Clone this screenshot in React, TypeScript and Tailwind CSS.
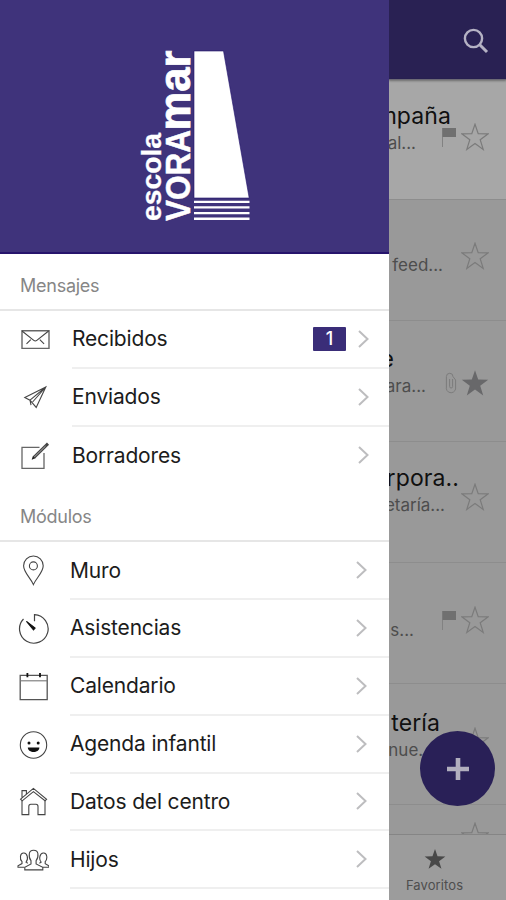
import type { ReactNode } from 'react';

const STAR =
  'M14 1.2 L17.2 10.6 L27.2 10.8 L19.2 16.8 L22.2 26.4 L14 20.6 L5.8 26.4 L8.8 16.8 L0.8 10.8 L10.8 10.6 Z';

function Star({ filled = false }: { filled?: boolean }) {
  return (
    <svg width="28" height="28" viewBox="0 0 28 28" className="shrink-0">
      <path d={STAR} fill={filled ? '#68686a' : 'none'} stroke={filled ? 'none' : '#7b7b7b'} strokeWidth="1.2" />
    </svg>
  );
}

function Flag() {
  return (
    <svg width="16" height="20" viewBox="0 0 16 20" className="shrink-0">
      <path d="M1.5 1V20" stroke="#828282" strokeWidth="1" />
      <path d="M1.5 1H15V10H1.5Z" fill="#707070" />
    </svg>
  );
}

function Clip() {
  return (
    <svg width="12" height="22" viewBox="0 0 12 22" className="shrink-0" fill="none" stroke="#7c7c7c" strokeWidth="1">
      <path d="M4.6 7V14.5M7.6 7V14.5M4.6 14.5a1.5 1.5 0 1 0 3 0M1.4 15V4.6a3.3 3.3 0 0 1 6.6 0M1.4 15a4.6 4.6 0 0 0 9.2 2V8L8 4.6" />
    </svg>
  );
}

type Mail = {
  title?: string;
  titleBox: string;
  sub?: string;
  subBox: string;
  mark?: ReactNode;
  filled?: boolean;
  shift: string;
  box: string;
};

const mails: Mail[] = [
  { title: 'mpaña', titleBox: 'w-[62px]', sub: 'al...', subBox: 'w-[27px]', mark: <Flag />, shift: 'mt-[1px]', box: 'h-[120px] bg-[#a7a7a7] pt-[21px]' },
  { titleBox: 'w-[60px]', sub: 'feed...', subBox: 'w-[54px]', shift: '-mt-[2px]', box: 'h-[121px] pt-[23px]' },
  { title: 'e', titleBox: 'w-[5px]', sub: 'ara...', subBox: 'w-[37px]', mark: <Clip />, filled: true, shift: 'mt-[4px]', box: 'h-[121px] pt-[23px]' },
  { title: 'rpora..', titleBox: 'w-[70px]', sub: 'etaría...', subBox: 'w-[56px]', shift: '-mt-[1px]', box: 'h-[121px] pt-[21px]' },
  { titleBox: 'w-[60px]', sub: 's...', subBox: 'w-[25px] mt-[2px]', mark: <Flag />, shift: '-mt-[1px]', box: 'h-[121px] pt-[23px]' },
  { title: 'tería', titleBox: 'w-[51px]', sub: 'nue...', subBox: 'w-[44px]', shift: '-mt-[2px]', box: 'h-[121px] pt-[24px]' },
  { titleBox: 'w-[60px]', subBox: 'w-[40px]', shift: '-mt-[4px]', box: 'h-[121px] pt-0' },
];

function MailRow({ m }: { m: Mail }) {
  return (
    <div className={`shrink-0 border-b border-[#8d8d8d] ${m.box}`}>
      <div className={`flex h-[30px] items-center justify-end whitespace-nowrap text-[23px] tracking-[0.1px] text-[#101010] ${m.titleBox}`}>
        {m.title}
      </div>
      <div className="flex h-[28px] justify-between pr-[17px]">
        <div className={`flex h-[26px] items-center justify-end whitespace-nowrap text-[17px] text-[#4d4d4d] ${m.subBox}`}>
          {m.sub}
        </div>
        <div className={`flex h-[28px] -translate-y-[9px] items-center gap-[4px] ${m.shift}`}>
          {m.mark}
          <Star filled={m.filled} />
        </div>
      </div>
    </div>
  );
}

function Icon({ children }: { children: ReactNode }) {
  return (
    <svg width="32" height="32" viewBox="0 0 32 32" fill="none" stroke="#444" strokeWidth="1.1" className="shrink-0">
      {children}
    </svg>
  );
}

const icons: Record<string, ReactNode> = {
  mail: (
    <Icon>
      <path d="M3 6.8H30V24.4H3Z" stroke="#666" strokeWidth="1.4" />
      <path d="M3 7L14.8 16.4Q16.3 17.6 17.8 16.4L29.6 7M7.5 19.8L11.8 15.6M25.1 19.8L20.8 15.6" />
    </Icon>
  ),
  send: (
    <Icon>
      <path d="M26.8 5L5.8 15.6L11 18.2L17.2 25.4ZM26.8 5L11 18.2L12 23.2M26.8 5L13.6 20" />
    </Icon>
  ),
  edit: (
    <Icon>
      <path d="M20.5 8.3H3V29.3H25V14" stroke="#666" strokeWidth="1.3" />
      <path d="M15 18.3L29 4.7" stroke="#444" strokeWidth="3" />
      <path d="M15 18.3L26.6 7" stroke="#aaa" strokeWidth="1" />
      <path d="M12.6 20.7L14 16.8L16.4 19.2Z" fill="#222" stroke="none" />
    </Icon>
  ),
  pin: (
    <Icon>
      <path d="M16.4 29.6C13.4 22.5 6.6 17.5 6.6 10.8A9.8 9.8 0 0 1 26.2 10.8C26.2 17.5 19.5 22.5 16.4 29.6Z" />
      <circle cx="16.4" cy="10.9" r="4" />
    </Icon>
  ),
  clock: (
    <Icon>
      <path d="M17.5 8.3V1.6A14.3 14.3 0 1 1 6.5 6" strokeWidth="1.2" />
      <path d="M9.5 8.4L18.1 15L16.5 16.8Z" fill="#111" stroke="#111" />
    </Icon>
  ),
  calendar: (
    <Icon>
      <path d="M3.2 4.3H30.2V28.7H3.2Z" stroke="#555" strokeWidth="1.3" />
      <path d="M3.2 9.8H30.2" stroke="#777" />
      <path d="M10.4 2V6.3M23 2V6.3" stroke="#111" strokeWidth="1.8" />
    </Icon>
  ),
  smile: (
    <Icon>
      <circle cx="16.5" cy="16" r="13.2" />
      <circle cx="12" cy="14" r="1.5" fill="#111" stroke="none" />
      <circle cx="21.2" cy="14" r="1.5" fill="#111" stroke="none" />
      <path d="M10.8 18.4H22.4C22.2 24.4 11 24.4 10.8 18.4Z" fill="#111" stroke="none" />
    </Icon>
  ),
  house: (
    <Icon>
      <path d="M3.6 13.2L16.4 2.4L29.6 13.2L28 14.8L16.4 5.6L5.2 14.8ZM5 11.6V4.6H9.4V8" />
      <path d="M5 14.8V28.6H11.8V20.5Q11.8 18.2 13.8 18.2H19Q21 18.2 21 20.5V28.6H28V14.8" />
    </Icon>
  ),
  people: (
    <Icon>
      <path d="M14 16.6C12.4 15 12 12.4 12.3 9.8C12.8 5 20.4 5 20.9 9.8C21.2 12.4 20.6 15 19.1 16.6V20L25.8 23.3V25.9H7.8V23.3L14 20Z" />
      <path d="M10.8 19.2L9.1 18.2C11.8 15 10.2 8.6 6.6 9C3 8.8 2.4 15 5 17.6V19.6L1 21.8V23.2H7.4" />
      <path d="M22.4 19.2L24.1 18.2C21.4 15 23 8.6 26.6 9C30.2 8.8 30.8 15 28.2 17.6V19.6L31.8 21.8V23.2H25.8" />
    </Icon>
  ),
};

function MenuRow({ icon, label, badge, wide, last }: { icon: string; label: string; badge?: string; wide?: boolean; last?: boolean }) {
  return (
    <div className={`flex h-[57.8px] shrink-0 ${wide ? 'pl-[17px]' : 'pl-[19px]'}`}>
      <div className="flex w-[32px] items-center">{icons[icon]}</div>
      <div className={`ml-[21px] flex flex-1 items-center pr-[20px] ${last ? '' : 'border-b-2 border-[#efefef]'}`}>
        <span className="flex-1 whitespace-nowrap text-[21px] tracking-[-0.17px] text-[#1c1c1c]">{label}</span>
        {badge && (
          <span className="mr-[12px] flex h-[24px] w-[33px] items-center justify-center rounded-[1px] bg-[#3a2d78] text-[18px] font-medium text-white">
            {badge}
          </span>
        )}
        <svg width="11" height="18" viewBox="0 0 11 18" fill="none" stroke="#bdbdbf" strokeWidth="2" className={wide ? 'mr-[2px]' : ''}>
          <path d="M1 1L9.5 9L1 17" />
        </svg>
      </div>
    </div>
  );
}

function SectionTitle({ children, box }: { children: ReactNode; box: string }) {
  return (
    <div className={`flex shrink-0 items-center border-b-2 border-[#e6e6e6] pl-[20px] text-[18px] tracking-[-0.25px] text-[#868686] ${box}`}>
      {children}
    </div>
  );
}

function Logo() {
  return (
    <div className="flex h-[254px] shrink-0 items-start border-b-2 border-[#26146c] bg-[#3f337b] pl-[138px] pt-[51px]">
      <svg width="113" height="172" viewBox="0 0 113 172" fill="#fff" overflow="visible" className="font-['Liberation_Sans',sans-serif] font-bold">
        <text transform="translate(22.8 170) rotate(-90)" fontSize="28" textLength="88" lengthAdjust="spacingAndGlyphs" stroke="#fff" strokeWidth="0.3">
          escola
        </text>
        <text transform="translate(52.3 170) rotate(-90)" fontSize="35" textLength="91" lengthAdjust="spacingAndGlyphs" stroke="#fff" strokeWidth="0.5">
          VORA
        </text>
        <text transform="translate(52.3 79.5) rotate(-90)" fontSize="45" textLength="80" lengthAdjust="spacingAndGlyphs" stroke="#fff" strokeWidth="0.8">
          mar
        </text>
        <path d="M56 0H85.5L111.2 147H56Z" stroke="#20106a" strokeWidth="0.6" />
        <path d="M56 149.7H111.5V152H56ZM56 155.3H111.5V157.6H56ZM56 160.9H111.5V163.2H56ZM56 166.5H111.5V169H56Z" />
      </svg>
    </div>
  );
}

export default function App() {
  return (
    <div className="relative flex h-[900px] w-[506px] overflow-hidden bg-white font-['Inter',sans-serif]">
      <aside className="z-10 flex w-[389px] shrink-0 flex-col overflow-hidden bg-white">
        <Logo />
        <SectionTitle box="h-[57px] pt-[8px]">Mensajes</SectionTitle>
        <MenuRow icon="mail" label="Recibidos" badge="1" />
        <MenuRow icon="send" label="Enviados" />
        <MenuRow icon="edit" label="Borradores" last />
        <SectionTitle box="h-[58px] pt-[8px]">Módulos</SectionTitle>
        <MenuRow icon="pin" label="Muro" wide />
        <MenuRow icon="clock" label="Asistencias" wide />
        <MenuRow icon="calendar" label="Calendario" wide />
        <MenuRow icon="smile" label="Agenda infantil" wide />
        <MenuRow icon="house" label="Datos del centro" wide />
        <MenuRow icon="people" label="Hijos" wide />
      </aside>

      <main className="flex w-[117px] flex-col bg-[#999]">
        <header className="flex h-[79px] shrink-0 items-center justify-end bg-[#292153] pr-[17px] pt-[2px]">
          <svg width="26" height="26" viewBox="0 0 26 26" fill="none" stroke="#b5b2c4">
            <circle cx="10.5" cy="10.5" r="8.6" strokeWidth="2.4" />
            <path d="M16.5 16.5L24 24" strokeWidth="3" />
          </svg>
        </header>
        <div className="z-[1] h-[1px] shrink-0 bg-[#6c6a76] shadow-[0_1px_2px_rgba(0,0,0,0.5)]" />
        <div className="flex h-[754px] shrink-0 flex-col overflow-y-clip">
          {mails.map((m, i) => (
            <MailRow key={i} m={m} />
          ))}
        </div>
        <footer className="flex h-[66px] shrink-0 flex-col items-center border-t border-[#858585] bg-[#9c9c9c] pr-[26px] pt-[13px]">
          <svg width="22" height="22" viewBox="0 0 28 28">
            <path d={STAR} fill="#484848" />
          </svg>
          <span className="mt-[6px] text-[13px] leading-[18px] tracking-[0.1px] text-[#4e4e4e]">Favoritos</span>
        </footer>
      </main>

      <button className="absolute left-[420px] top-[731px] z-20 flex h-[75px] w-[75px] items-center justify-center rounded-full bg-[#292057]">
        <svg width="24" height="24" viewBox="0 0 24 24" stroke="#b1aebe" strokeWidth="4.6">
          <path d="M12 1V23M1 12H23" />
        </svg>
      </button>
    </div>
  );
}
